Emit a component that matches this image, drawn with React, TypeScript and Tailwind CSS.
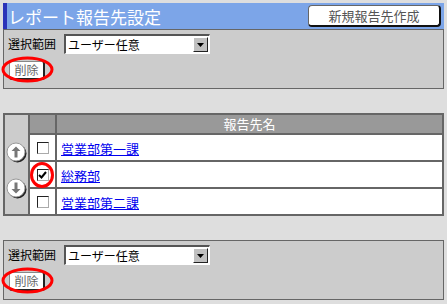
const FONT = "font-['MS_UI_Gothic','Noto_Sans_CJK_JP',sans-serif]";

function SelectBox() {
  return (
    <div className="flex h-[20px] w-[146px] border-t-2 border-l-2 border-t-[#555] border-l-[#555] border-b border-r border-b-white border-r-white bg-white">
      <div className="flex-1 pl-[2px] text-[12px] leading-[17px] text-black">ユーザー任意</div>
      <div className="m-px flex w-[15px] items-center justify-center border border-t-white border-l-white border-b-[#222] border-r-[#222] bg-[#c0c0c0]">
        <svg width="7" height="4" viewBox="0 0 7 4">
          <path d="M0 0h7L3.5 4Z" fill="#000" />
        </svg>
      </div>
    </div>
  );
}

function DeleteButton() {
  return (
    <div className="relative ml-[1px] w-fit">
      <div className="flex h-[19px] w-[36px] items-center justify-center rounded-[3px] border border-[#888] border-b-2 border-r-2 border-b-[#222] border-r-[#222] bg-white text-[12px] text-[#666]">
        削除
      </div>
      <svg className="absolute left-[-8px] top-[-5px]" width="53" height="27" viewBox="0 0 53 27">
        <ellipse cx="26.5" cy="13.5" rx="24.5" ry="11.5" fill="none" stroke="#ff0000" strokeWidth="3" />
      </svg>
    </div>
  );
}

function RangePanel() {
  return (
    <div className="flex h-[60px] flex-col gap-[7px] border border-[#666] bg-[#cccccc] pl-[4px] pt-[4px]">
      <div className="flex items-center gap-[8px]">
        <span className="text-[12px] text-black">選択範囲</span>
        <SelectBox />
      </div>
      <DeleteButton />
    </div>
  );
}

function ArrowButton(props: { dir: "up" | "down" }) {
  return (
    <svg width="22" height="22" viewBox="0 0 22 22">
      <circle cx="11.5" cy="11.5" r="9" fill="#222" />
      <circle cx="10" cy="10" r="9" fill="#fff" stroke="#999" strokeWidth="1" />
      {props.dir === "up" ? (
        <path d="M10 4.5 5.5 9h3v6.5h3V9h3Z" fill="#777" />
      ) : (
        <path d="M10 15.5 5.5 11h3V4.5h3V11h3Z" fill="#777" />
      )}
    </svg>
  );
}

function CheckBox(props: { checked?: boolean }) {
  return (
    <div className="mx-auto flex h-[12px] w-[12px] items-center justify-center border border-t-[#222] border-l-[#222] border-b-[#aaa] border-r-[#aaa] bg-white">
      {props.checked && (
        <svg width="9" height="8" viewBox="0 0 9 8">
          <path d="M1 4l2.5 2.5L8 1" fill="none" stroke="#000" strokeWidth="2" />
        </svg>
      )}
    </div>
  );
}

const ROWS = [
  { name: "営業部第一課", checked: false },
  { name: "総務部", checked: true },
  { name: "営業部第二課", checked: false },
];

export default function App() {
  return (
    <div className={`h-[304px] w-[447px] bg-[#dedede] px-[3px] pt-[3px] ${FONT}`}>
      <div className="flex h-[26px] items-center justify-between border-l-4 border-[#2b33b8] bg-[#7ca5e8] pl-[1px] pr-[3px]">
        <span className="text-[17px] leading-none text-white">レポート報告先設定</span>
        <div className="flex h-[22px] w-[133px] items-center justify-center rounded-[4px] border border-[#666] border-b-2 border-r-2 border-b-[#111] border-r-[#111] bg-white text-[13px] text-[#555]">
          新規報告先作成
        </div>
      </div>

      <RangePanel />

      <table className="mt-[24px] w-[441px] border-collapse">
        <tbody>
          <tr className="h-[20px] bg-[#999999]">
            <td rowSpan={4} className="w-[25px] border-2 border-[#666] bg-[#cccccc] p-0 align-top">
              <div className="flex flex-col items-center gap-[14px] pl-[1px] pt-[27px]">
                <ArrowButton dir="up" />
                <ArrowButton dir="down" />
              </div>
            </td>
            <td className="w-[27px] border-2 border-[#666] p-0" />
            <td className="border-2 border-[#666] p-0 text-center text-[13px] leading-[16px] text-white">報告先名</td>
          </tr>
          {ROWS.map((row) => (
            <tr key={row.name} className="h-[27px] bg-white">
              <td className="relative border-2 border-[#666] p-0">
                <CheckBox checked={row.checked} />
                {row.checked && (
                  <svg className="absolute left-[0px] top-[0px]" width="24" height="26" viewBox="0 0 24 26">
                    <ellipse cx="12" cy="13" rx="10.5" ry="11.5" fill="none" stroke="#ff0000" strokeWidth="3" />
                  </svg>
                )}
              </td>
              <td className="border-2 border-[#666] p-0 pl-[4px] leading-[16px]">
                <a href="#" className="text-[13px] text-[#0000ee] underline">
                  {row.name}
                </a>
              </td>
            </tr>
          ))}
        </tbody>
      </table>

      <div className="mt-[24px]">
        <RangePanel />
      </div>
    </div>
  );
}
